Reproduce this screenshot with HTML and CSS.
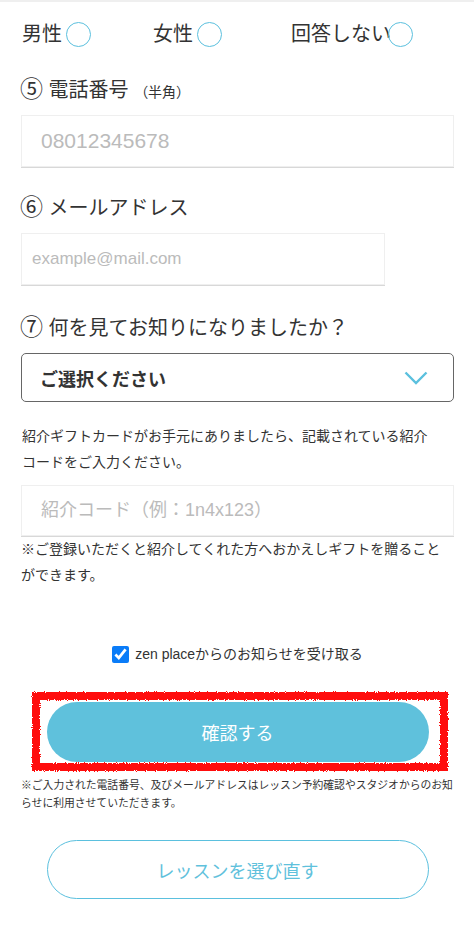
FILE: index.html
```html
<!DOCTYPE html>
<html>

<head>
    <meta charset="utf-8">
    <title>Reservation form</title>
    <link rel="stylesheet" href="styles.css">
</head>

<body>
    <svg class="svg_defs" width="0" height="0">
        <defs>
            <filter id="rough">
                <feTurbulence type="fractalNoise" baseFrequency="0.9" numOctaves="2" result="noise"/>
                <feDisplacementMap in="SourceGraphic" in2="noise" scale="4"/>
            </filter>
        </defs>
    </svg>

    <div class="page">
        <div class="gender_row">
            <label class="gender_item gender_male"><span>男性</span><span class="radio"></span></label>
            <label class="gender_item gender_female"><span>女性</span><span class="radio"></span></label>
            <label class="gender_item"><span>回答しない</span><span class="radio radio_tight"></span></label>
        </div>

        <div class="field_label"><span class="circled_num">⑤</span> 電話番号 <span class="sub_label">（半角）</span></div>
        <input class="text_input" type="tel" placeholder="08012345678">

        <div class="field_label field_label_tight"><span class="circled_num">⑥</span> メールアドレス</div>
        <input class="text_input email_input" type="email" placeholder="example@mail.com">

        <div class="field_label"><span class="circled_num">⑦</span> 何を見てお知りになりましたか？</div>
        <div class="select_box">
            <span>ご選択ください</span>
            <svg width="24" height="14" viewBox="0 0 24 14">
                <polyline points="1.5,1.5 12,12 22.5,1.5" fill="none" stroke="#5bc0de" stroke-width="2.4"/>
            </svg>
        </div>

        <p class="intro_text">紹介ギフトカードがお手元にありましたら、記載されている紹介コードをご入力ください。</p>
        <input class="text_input code_input" type="text" placeholder="紹介コード（例：1n4x123）">
        <p class="gift_note">※ご登録いただくと紹介してくれた方へおかえしギフトを贈ることができます。</p>

        <div class="notify_row">
            <input class="notify_check" type="checkbox" id="fnotify" checked>
            <label for="fnotify">zen placeからのお知らせを受け取る</label>
        </div>

        <div class="confirm_wrap">
            <button class="confirm_button">確認する</button>
            <div class="red_mark"></div>
        </div>

        <p class="privacy_note">※ご入力された電話番号、及びメールアドレスはレッスン予約確認やスタジオからのお知らせに利用させていただきます。</p>

        <button class="back_button">レッスンを選び直す</button>
    </div>
</body>

</html>
```

FILE: styles.css
```css
        body {
            margin: 0;
            border-top: 2px solid #efefef;
            background: #fff;
            color: #333;
            font-family: "Liberation Sans", "Noto Sans CJK JP", sans-serif;
        }

        .svg_defs {
            position: absolute;
        }

        .page {
            padding: 20px 20px 40px 21px;
        }

        .gender_row {
            display: flex;
            align-items: center;
            height: 25px;
            font-size: 20px;
            line-height: 25px;
        }

        .gender_item {
            display: flex;
            align-items: center;
        }

        .gender_male {
            width: 131px;
            padding-left: 1px;
        }

        .gender_female {
            width: 138px;
        }

        .radio {
            width: 25px;
            height: 25px;
            box-sizing: border-box;
            border: 1.5px solid #5bc0de;
            border-radius: 50%;
            margin-left: 4px;
        }

        .radio_tight {
            margin-left: -3px;
        }

        .field_label {
            height: 30px;
            margin-top: 28px;
            font-size: 20px;
            line-height: 30px;
        }

        .field_label_tight {
            margin-top: 26px;
        }

        .circled_num {
            font-size: 23px;
            line-height: 20px;
            margin-left: -1px;
        }

        .sub_label {
            font-size: 14px;
        }

        .text_input {
            display: block;
            box-sizing: border-box;
            width: 100%;
            height: 52px;
            margin-top: 10px;
            padding: 0 19px;
            border: 1px solid #efefef;
            border-radius: 0;
            box-shadow: 0 1px 0 #d8d8d8;
            font-family: inherit;
            font-size: 21px;
            color: #333;
            outline: none;
        }

        .text_input::placeholder {
            color: #bbbbbb;
        }

        .email_input {
            width: 364px;
            padding: 0 10px;
            font-size: 17px;
        }

        .code_input {
            height: 51px;
            font-size: 18px;
        }

        .select_box {
            display: flex;
            align-items: center;
            justify-content: space-between;
            box-sizing: border-box;
            height: 49px;
            margin-top: 10px;
            padding: 0 25px 0 18px;
            border: 1px solid #666;
            border-radius: 5px;
            font-size: 18px;
            font-weight: bold;
        }

        .intro_text {
            width: 418px;
            margin: 21px 0 0 1px;
            font-size: 14px;
            line-height: 26px;
        }

        .gift_note {
            margin: 0;
            font-size: 14px;
            line-height: 26px;
        }

        .notify_row {
            display: flex;
            align-items: center;
            justify-content: center;
            gap: 6px;
            margin-top: 56px;
            font-size: 14px;
            line-height: 20px;
        }

        .notify_check {
            width: 17px;
            height: 17px;
            margin: 0;
            accent-color: #0a7cf8;
        }

        .confirm_wrap {
            position: relative;
            width: 382px;
            margin: 38px auto 0;
        }

        .confirm_button {
            display: block;
            width: 100%;
            height: 60px;
            border: none;
            border-radius: 30px;
            background: #5fc1dc;
            color: #fff;
            font-family: inherit;
            font-size: 18px;
        }

        .red_mark {
            position: absolute;
            top: -10px;
            left: -15px;
            right: -19px;
            bottom: -9px;
            border: 8px solid #ff1010;
            filter: url(#rough);
            pointer-events: none;
        }

        .privacy_note {
            margin: 14px 0 0;
            font-size: 10.8px;
            line-height: 18px;
        }

        .back_button {
            display: block;
            width: 382px;
            height: 59px;
            margin: 28px auto 0;
            border: 1px solid #5bc0de;
            border-radius: 30px;
            background: #fff;
            color: #5fc1dc;
            font-family: inherit;
            font-size: 18px;
        }
```
